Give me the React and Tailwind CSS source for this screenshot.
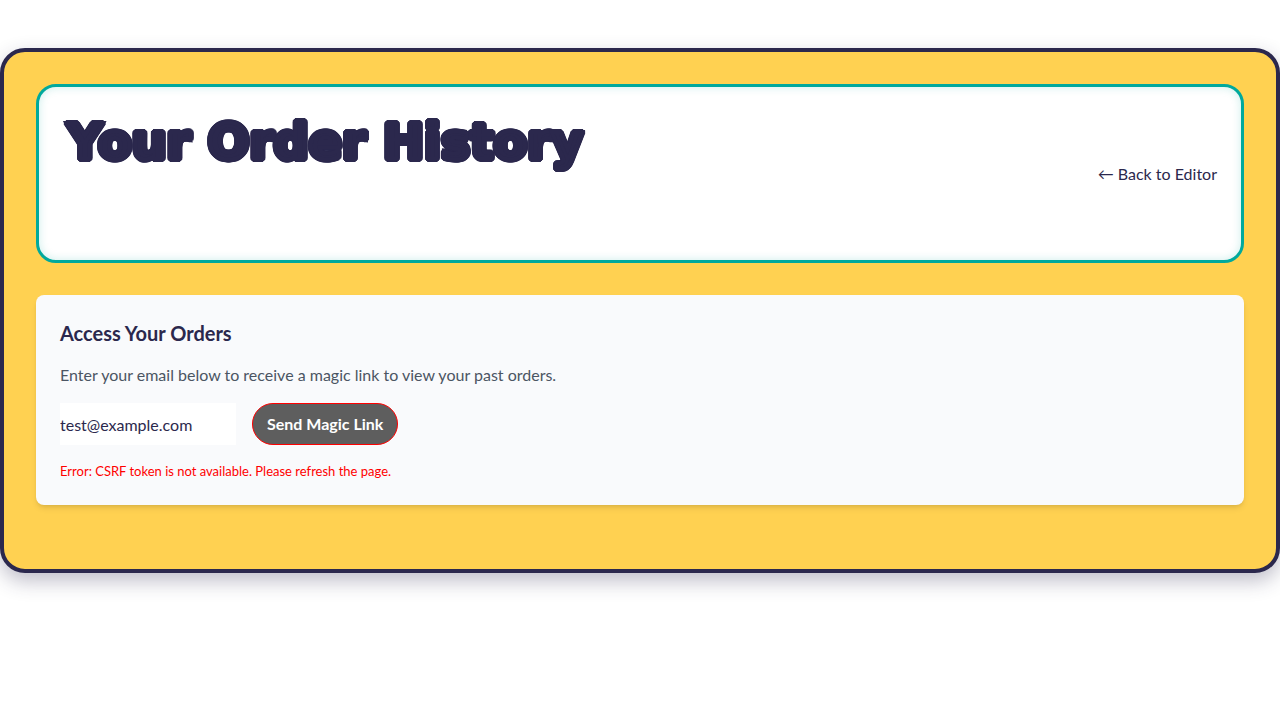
import { useState } from "react";

function PageHeader() {
  return (
    <header className="flex items-center justify-between rounded-[20px] border-[3px] border-[#00a99d] bg-white p-6 shadow-[inset_0_0_10px_rgba(0,169,157,0.2)]">
      <h1 className="mb-[61px] pl-1 font-['DejaVu_Sans',sans-serif] text-[49px] leading-[64px] font-bold [-webkit-text-stroke:4px_#2b284d] [text-shadow:3px_0_0_#2b284d,3px_1px_0_#2b284d,2px_2px_0_#2b284d,1px_3px_0_#2b284d,0_3px_0_#2b284d,-1px_3px_0_#2b284d,-2px_2px_0_#2b284d,-3px_1px_0_#2b284d,-3px_0_0_#2b284d,-3px_-1px_0_#2b284d,-2px_-2px_0_#2b284d,-1px_-3px_0_#2b284d,0_-3px_0_#2b284d,1px_-3px_0_#2b284d,2px_-2px_0_#2b284d,3px_-1px_0_#2b284d]">
        Your Order History
      </h1>
      <a href="#editor" className="shrink-0 hover:underline">
        ← Back to Editor
      </a>
    </header>
  );
}

function AccessOrders() {
  const [email, setEmail] = useState("test@example.com");

  return (
    <section className="rounded-lg bg-[#f9fafc] p-6 shadow-md">
      <h2 className="mb-4 text-xl leading-7 font-bold">Access Your Orders</h2>
      <p className="mb-4 text-[#4b5563]">
        Enter your email below to receive a magic link to view your past orders.
      </p>
      <form className="flex flex-wrap gap-4" onSubmit={(e) => e.preventDefault()}>
        <input
          type="email"
          aria-label="Email address"
          value={email}
          onChange={(e) => setEmail(e.target.value)}
          className="h-[42px] w-44 bg-white outline-none"
        />
        <button
          type="submit"
          className="h-[42px] rounded-full border border-[#ff0000] bg-[#5e5e5e] px-[14px] font-bold text-white"
        >
          Send Magic Link
        </button>
      </form>
      <p role="alert" className="mt-4 text-[13px] leading-5 text-[#ff0000]">
        Error: CSRF token is not available. Please refresh the page.
      </p>
    </section>
  );
}

export default function App() {
  return (
    <div className="min-h-screen bg-white pt-12 font-[Lato,sans-serif] text-base text-[#2b284d]">
      <main className="flex flex-col gap-8 rounded-[25px] border-4 border-[#2b284d] bg-[#ffd151] px-8 pt-8 pb-16 shadow-[0_8px_20px_rgba(43,40,77,0.3)]">
        <PageHeader />
        <AccessOrders />
      </main>
    </div>
  );
}
